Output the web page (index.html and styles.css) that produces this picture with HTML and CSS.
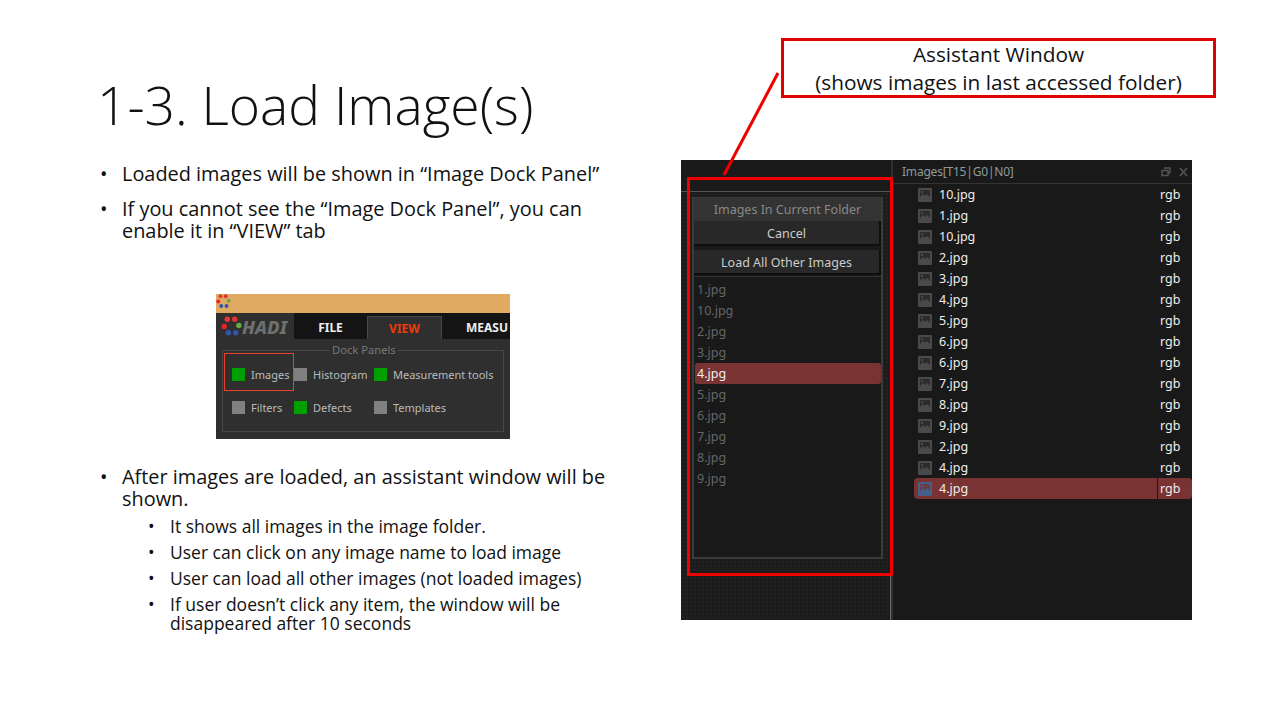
FILE: index.html
```html
<!DOCTYPE html>
<html lang="en">
<head>
    <meta charset="UTF-8">
    <title>1-3. Load Image(s)</title>
    <link rel="stylesheet" href="styles.css">
</head>
<body>
    <svg class="defs" width="0" height="0">
        <symbol id="pic" viewBox="0 0 14 14">
            <rect class="pic-bg" width="14" height="14" rx="1"/>
            <rect class="pic-in" x="2" y="2" width="10" height="10"/>
            <path class="pic-bg" d="M2 12V9l3-3 2 2 2-2 3 3v3z"/>
            <rect class="pic-bg" x="3" y="3" width="2" height="2"/>
        </symbol>
        <symbol id="logo" viewBox="0 0 20 20">
            <circle cx="6" cy="3" r="2.6" fill="#e33"/>
            <circle cx="13" cy="3" r="2.6" fill="#d33"/>
            <circle cx="17" cy="9" r="2.6" fill="#6a4"/>
            <circle cx="3" cy="10" r="2.6" fill="#e22"/>
            <circle cx="7" cy="16" r="2.6" fill="#35a"/>
            <circle cx="14" cy="16" r="2.6" fill="#35a"/>
        </symbol>
    </svg>

    <div class="slide">
        <div class="text-col">
            <h1>1-3. Load Image(s)</h1>
            <ul class="list first">
                <li>Loaded images will be shown in “Image Dock Panel”</li>
                <li>If you cannot see the “Image Dock Panel”, you can enable it in “VIEW” tab</li>
            </ul>

            <div class="ribbon">
                <div class="ribbon-top"><svg class="logo-small"><use href="#logo"/></svg></div>
                <div class="ribbon-tabs">
                    <div class="hadi"><svg class="logo-big"><use href="#logo"/></svg><span>HADI</span></div>
                    <div class="tab-strip">
                        <span class="tab tab-file">FILE</span>
                        <span class="tab tab-view">VIEW</span>
                        <span class="tab tab-meas">MEASU</span>
                    </div>
                </div>
                <div class="group">
                    <span class="group-title">Dock Panels</span>
                    <div class="checks">
                        <div class="check"><i class="box on"></i>Images</div>
                        <div class="check"><i class="box"></i>Histogram</div>
                        <div class="check"><i class="box on"></i>Measurement tools</div>
                        <div class="check"><i class="box"></i>Filters</div>
                        <div class="check"><i class="box on"></i>Defects</div>
                        <div class="check"><i class="box"></i>Templates</div>
                    </div>
                    <div class="images-mark"></div>
                </div>
            </div>

            <ul class="list second">
                <li>After images are loaded, an assistant window will be shown.
                    <ul class="sublist">
                        <li>It shows all images in the image folder.</li>
                        <li>User can click on any image name to load image</li>
                        <li>User can load all other images (not loaded images)</li>
                        <li>If user doesn’t click any item, the window will be disappeared after 10 seconds</li>
                    </ul>
                </li>
            </ul>
        </div>

        <div class="shot-col">
            <div class="callout"><span>Assistant Window<br>(shows images in last accessed folder)</span></div>
            <div class="app">
                <div class="dock-left">
                    <div class="assist-frame">
                        <div class="assist">
                            <div class="assist-title">Images In Current Folder</div>
                            <button class="assist-btn">Cancel</button>
                            <button class="assist-btn second-btn">Load All Other Images</button>
                            <div class="assist-list">
                                <div class="assist-row">1.jpg</div>
                                <div class="assist-row">10.jpg</div>
                                <div class="assist-row">2.jpg</div>
                                <div class="assist-row">3.jpg</div>
                                <div class="assist-row selected">4.jpg</div>
                                <div class="assist-row">5.jpg</div>
                                <div class="assist-row">6.jpg</div>
                                <div class="assist-row">7.jpg</div>
                                <div class="assist-row">8.jpg</div>
                                <div class="assist-row">9.jpg</div>
                            </div>
                        </div>
                    </div>
                </div>
                <div class="dock-right">
                    <div class="dock-head">
                        <span>Images[T15|G0|N0]</span>
                        <svg class="dock-icons" width="28" height="10" viewBox="0 0 28 10">
                            <path d="M3 1h6v5H7M1 3.5h6v5H1z" fill="none" stroke="#555" stroke-width="1.4"/>
                            <path d="M19 1l7 8M26 1l-7 8" fill="none" stroke="#555" stroke-width="1.6"/>
                        </svg>
                    </div>
                    <div class="img-rows">
                        <div class="img-row"><svg class="pic"><use href="#pic"/></svg><span class="img-name">10.jpg</span><span class="img-type">rgb</span></div>
                        <div class="img-row"><svg class="pic"><use href="#pic"/></svg><span class="img-name">1.jpg</span><span class="img-type">rgb</span></div>
                        <div class="img-row"><svg class="pic"><use href="#pic"/></svg><span class="img-name">10.jpg</span><span class="img-type">rgb</span></div>
                        <div class="img-row"><svg class="pic"><use href="#pic"/></svg><span class="img-name">2.jpg</span><span class="img-type">rgb</span></div>
                        <div class="img-row"><svg class="pic"><use href="#pic"/></svg><span class="img-name">3.jpg</span><span class="img-type">rgb</span></div>
                        <div class="img-row"><svg class="pic"><use href="#pic"/></svg><span class="img-name">4.jpg</span><span class="img-type">rgb</span></div>
                        <div class="img-row"><svg class="pic"><use href="#pic"/></svg><span class="img-name">5.jpg</span><span class="img-type">rgb</span></div>
                        <div class="img-row"><svg class="pic"><use href="#pic"/></svg><span class="img-name">6.jpg</span><span class="img-type">rgb</span></div>
                        <div class="img-row"><svg class="pic"><use href="#pic"/></svg><span class="img-name">6.jpg</span><span class="img-type">rgb</span></div>
                        <div class="img-row"><svg class="pic"><use href="#pic"/></svg><span class="img-name">7.jpg</span><span class="img-type">rgb</span></div>
                        <div class="img-row"><svg class="pic"><use href="#pic"/></svg><span class="img-name">8.jpg</span><span class="img-type">rgb</span></div>
                        <div class="img-row"><svg class="pic"><use href="#pic"/></svg><span class="img-name">9.jpg</span><span class="img-type">rgb</span></div>
                        <div class="img-row"><svg class="pic"><use href="#pic"/></svg><span class="img-name">2.jpg</span><span class="img-type">rgb</span></div>
                        <div class="img-row"><svg class="pic"><use href="#pic"/></svg><span class="img-name">4.jpg</span><span class="img-type">rgb</span></div>
                        <div class="img-row current"><svg class="pic"><use href="#pic"/></svg><span class="img-name">4.jpg</span><span class="img-type">rgb</span></div>
                    </div>
                </div>
            </div>
            <!-- red marks drawn over the screenshot -->
            <div class="red-box"></div>
            <svg class="red-line" width="60" height="110" viewBox="0 0 60 110">
                <path d="M57 1L3 103" stroke="#e00" stroke-width="3" fill="none"/>
            </svg>
        </div>
    </div>
</body>
</html>
```

FILE: styles.css
```css
body {
    margin: 0;
    background-color: #fff;
    font-family: "Open Sans", Arial, sans-serif;
    color: #111;
}
.defs {
    position: absolute;
}
.slide {
    width: 1280px;
    height: 720px;
    display: flex;
    overflow: hidden;
}
.text-col {
    width: 582px;
    padding-left: 99px;
    box-sizing: content-box;
    flex: none;
}
h1 {
    margin: 66px 0 0 -2px;
    font-size: 53.3px;
    line-height: 78px;
    font-weight: 300;
    color: #111;
}
.list {
    margin: 0;
    padding: 0 0 0 23px;
    font-size: 19.9px;
    line-height: 22px;
    width: 490px;
    list-style: none;
}
.list li {
    position: relative;
}
.list li::before {
    content: "•";
    position: absolute;
    left: -22px;
    top: 0;
}
.list > li {
    margin-bottom: 13px;
}
.first {
    margin-top: 19px;
}
.second {
    margin-top: 27px;
}
.sublist {
    margin: 3px 0 0;
    padding: 0 0 0 48px;
    font-size: 17.5px;
    line-height: 19px;
    list-style: none;
}
.sublist li {
    margin-top: 7px;
}

/* ribbon screenshot */
.ribbon {
    width: 294px;
    height: 145px;
    margin: 52px 0 0 117px;
    background-color: #2f2f2f;
    display: flex;
    flex-direction: column;
    font-family: "Noto Sans", Arial, sans-serif;
}
.ribbon-top {
    height: 19px;
    background-color: #e0aa63;
    flex: none;
}
.logo-small {
    display: block;
    width: 15px;
    height: 15px;
}
.ribbon-tabs {
    height: 26px;
    display: flex;
    flex: none;
}
.hadi {
    width: 78px;
    display: flex;
    align-items: center;
    padding-left: 5px;
    box-sizing: border-box;
    font-size: 18.5px;
    font-weight: 800;
    font-style: italic;
    color: #6f6f6f;
}
.logo-big {
    width: 21px;
    height: 21px;
    flex: none;
}
.tab-strip {
    flex: 1;
    display: flex;
    align-items: stretch;
    background-color: #141414;
    font-size: 12px;
    font-weight: 700;
    overflow: hidden;
    white-space: nowrap;
}
.tab {
    text-align: center;
    line-height: 30px;
    color: #eee;
}
.tab-file {
    width: 73px;
}
.tab-view {
    width: 75px;
    margin-top: 3px;
    line-height: 24px;
    background-color: #2f2f2f;
    border: 1px solid #484848;
    border-bottom: none;
    box-sizing: border-box;
    color: #f03a0a;
}
.tab-meas {
    padding-left: 24px;
}
.group {
    position: relative;
    margin: 11px 6px 0;
    height: 82px;
    border: 1px solid #484848;
    box-sizing: border-box;
}
.group-title {
    position: absolute;
    top: -9px;
    left: 107px;
    padding: 0 2px;
    background-color: #2f2f2f;
    font-size: 11.2px;
    line-height: 15px;
    color: #777;
}
.checks {
    display: grid;
    grid-template-columns: 62px 80px auto;
    grid-auto-rows: 33px;
    padding: 7px 0 0 9px;
    font-size: 11px;
    color: #bbb;
}
.check {
    display: flex;
    align-items: center;
    gap: 6px;
    white-space: nowrap;
}
.box {
    width: 13px;
    height: 13px;
    background-color: #808080;
    flex: none;
}
.box.on {
    background-color: #00a000;
}
.images-mark {
    position: absolute;
    left: 1px;
    top: 2px;
    width: 70px;
    height: 38px;
    border: 1px solid #e8402c;
    box-sizing: border-box;
}

/* right side */
.shot-col {
    position: relative;
    padding-top: 38px;
    flex: none;
}
.callout {
    width: 435px;
    height: 60px;
    margin-left: 100px;
    border: 3px solid #e00000;
    box-sizing: border-box;
    display: flex;
    align-items: center;
    justify-content: center;
    text-align: center;
    font-size: 20.8px;
    line-height: 28px;
    color: #111;
}
.app {
    width: 511px;
    height: 460px;
    margin-top: 62px;
    display: flex;
    font-family: "Noto Sans", Arial, sans-serif;
    font-size: 12.5px;
}
.dock-left {
    width: 212px;
    padding-top: 31px;
    box-sizing: border-box;
    background-color: #1c1c1c;
    background-image: linear-gradient(#1a1a1a, #1a1a1a), radial-gradient(#2a2a2a 0.6px, transparent 0.8px);
    background-size: 100% 31px, 4px 4px;
    background-repeat: no-repeat, repeat;
    border-right: 2px solid #303030;
    flex: none;
}
.assist-frame {
    height: 429px;
    padding: 5px 7px 0 11px;
    border-top: 1px solid #555;
    border-right: 1px solid #666;
    box-sizing: border-box;
}
.assist {
    height: 362px;
    border: 2px solid #3a3a3a;
    border-top-width: 1px;
    box-sizing: border-box;
    background-color: #191919;
}
.assist-title {
    height: 23px;
    line-height: 23px;
    text-align: center;
    background-color: #333;
    color: #888;
}
.assist-btn {
    display: block;
    width: 100%;
    height: 25px;
    padding: 2px 0 0;
    border: none;
    border-bottom: 2px solid #0e0e0e;
    border-right: 2px solid #0e0e0e;
    background-color: #282828;
    font-family: inherit;
    font-size: 12.5px;
    color: #ccc;
}
.second-btn {
    margin-top: 4px;
}
.assist-list {
    margin-top: 1px;
    padding-top: 2px;
    border-top: 1px solid #333;
}
.assist-row {
    height: 21px;
    line-height: 21px;
    padding-left: 2px;
    margin: 0 0 0 1px;
    color: #666;
}
.assist-row.selected {
    background-color: #7a3333;
    border-radius: 3px;
    color: #eee;
}
.dock-right {
    flex: 1;
    min-width: 0;
    background-color: #191919;
}
.dock-head {
    height: 23px;
    display: flex;
    align-items: center;
    justify-content: space-between;
    padding: 0 3px 0 9px;
    border-bottom: 1px solid #333;
    font-size: 12px;
    letter-spacing: -0.2px;
    color: #8f9c9c;
}
.img-row {
    height: 21px;
    display: flex;
    align-items: center;
    margin-left: 21px;
    padding-left: 4px;
    color: #eee;
    --pic-bg: #4a4a4a;
    --pic-in: #2c2c2c;
}
.pic {
    width: 14px;
    height: 14px;
    flex: none;
}
.pic-bg {
    fill: var(--pic-bg);
}
.pic-in {
    fill: var(--pic-in);
}
.img-name {
    margin-left: 7px;
    width: 221px;
}
.img-type {
    width: 32px;
}
.img-row.current {
    background: linear-gradient(to right, #7a3333 243px, #191919 243px, #191919 244px, #7a3333 244px);
    border-radius: 4px;
    --pic-bg: #43608a;
    --pic-in: #6f3a40;
}
.red-box {
    position: absolute;
    left: 6px;
    top: 177px;
    width: 206px;
    height: 399px;
    border: 3px solid #f00000;
    box-sizing: border-box;
}
.red-line {
    position: absolute;
    left: 40px;
    top: 72px;
}
```
